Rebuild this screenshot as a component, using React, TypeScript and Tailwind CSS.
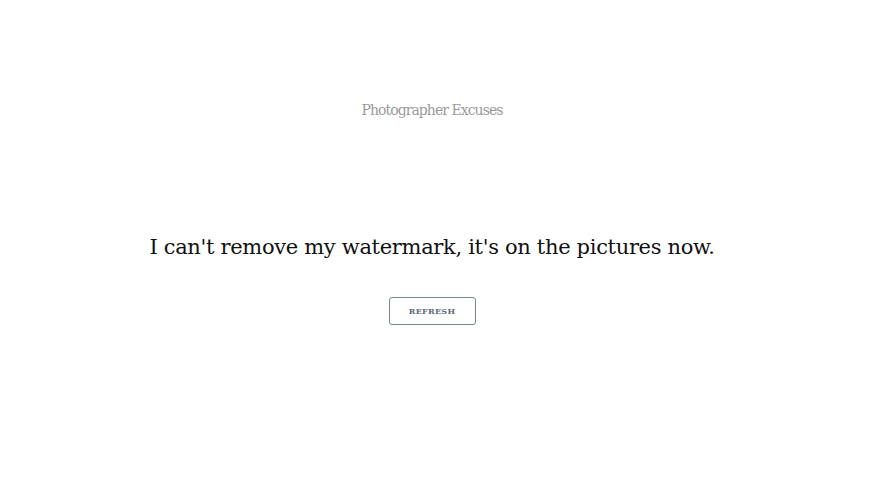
export default function App() {
  return (
    <div className="w-[864px] h-[492px] bg-white flex flex-col items-center" style={{ fontFamily: '"DejaVu Serif", serif' }}>
      <div className="mt-[101px] h-[18px] text-[14px] leading-[18px] tracking-[-0.95px] text-[#9a9a9a]">Photographer Excuses</div>
      <div className="mt-[113px] h-[30px] text-[21px] leading-[30px] tracking-[-0.32px] text-[#111]">I can't remove my watermark, it's on the pictures now.</div>
      <button className="mt-[35px] w-[87px] h-[28px] border border-[#7c8691] rounded-[3px] text-[8px] tracking-[0.3px] font-bold text-[#5f6b78] bg-white">REFRESH</button>
    </div>
  );
}
